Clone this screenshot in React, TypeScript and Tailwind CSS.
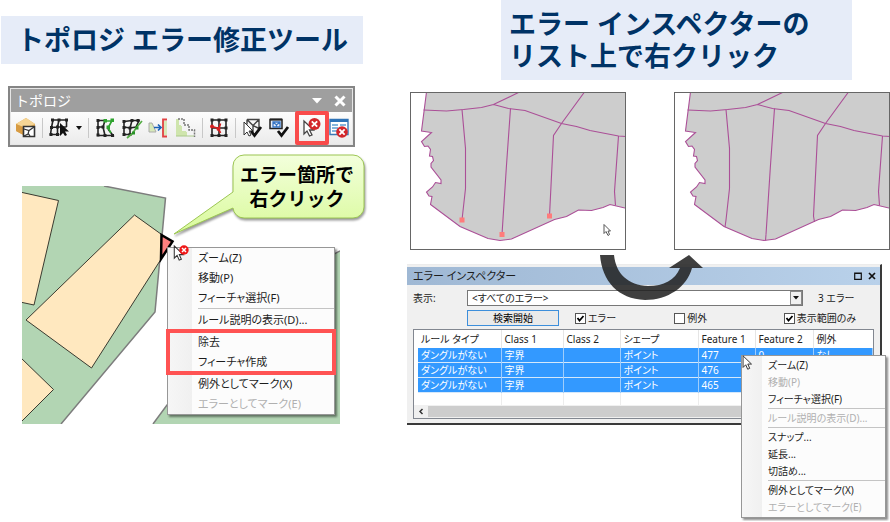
import { ReactNode } from "react";
import clsx from "clsx";

type MenuEntry = { label: string; disabled?: boolean };

const featureMenu: MenuEntry[][] = [
  [{ label: "ズーム(Z)" }, { label: "移動(P)" }, { label: "フィーチャ選択(F)" }],
  [{ label: "ルール説明の表示(D)..." }],
  [{ label: "除去" }, { label: "フィーチャ作成" }],
  [
    { label: "例外としてマーク(X)" },
    { label: "エラーとしてマーク(E)", disabled: true },
  ],
];

const inspectorMenu: MenuEntry[][] = [
  [
    { label: "ズーム(Z)" },
    { label: "移動(P)", disabled: true },
    { label: "フィーチャ選択(F)" },
  ],
  [{ label: "ルール説明の表示(D)...", disabled: true }],
  [{ label: "スナップ..." }, { label: "延長..." }, { label: "切詰め..." }],
  [
    { label: "例外としてマーク(X)" },
    { label: "エラーとしてマーク(E)", disabled: true },
  ],
];

const columns = [
  { title: "ルール タイプ", width: "w-[83px]" },
  { title: "Class 1", width: "w-[62px]" },
  { title: "Class 2", width: "w-[57px]" },
  { title: "シェープ", width: "w-[78px]" },
  { title: "Feature 1", width: "w-[57px]" },
  { title: "Feature 2", width: "w-[58px]" },
  { title: "例外", width: "" },
];

const errors = [
  ["ダングルがない", "字界", "", "ポイント", "477", "0", "なし"],
  ["ダングルがない", "字界", "", "ポイント", "476", "0", "なし"],
  ["ダングルがない", "字界", "", "ポイント", "465", "0", "なし"],
];

function Cursor({ className }: { className?: string }) {
  return (
    <svg viewBox="0 0 12 18" className={className} aria-hidden>
      <path
        d="M1 1v13l3-3 2.2 5 2.3-1-2.2-4.8h4.2z"
        fill="#fff"
        stroke="#333"
        strokeWidth="1.1"
      />
    </svg>
  );
}

function ContextMenu({
  groups,
  large,
  highlight,
}: {
  groups: MenuEntry[][];
  large?: boolean;
  highlight?: number;
}) {
  return (
    <div
      className={clsx(
        "border border-[#979797] shadow-[2px_2px_2px_rgba(0,0,0,0.45)] [font-feature-settings:'palt']",
        large
          ? "bg-[linear-gradient(to_right,#f6f6f6_0,#f0f0f0_24px,#fcfcfc_24px)] text-[11px]"
          : "bg-[linear-gradient(to_right,#f6f6f6_0,#f0f0f0_20px,#fcfcfc_20px)] py-px text-[10px]"
      )}
    >
      {groups.map((group, i) => (
        <div key={i}>
          {i > 0 && (
            <div
              className={clsx(
                "h-0.5 border-t border-[#c4c4c4]",
                large ? "ml-[30px]" : "ml-[26px]"
              )}
            />
          )}
          <div className="relative">
            {group.map((entry) => (
              <button
                key={entry.label}
                disabled={entry.disabled}
                className={clsx(
                  "block w-full text-left whitespace-nowrap text-[#1c1c1c] disabled:text-[#b0b0b0]",
                  large ? "h-5 pl-[30px] leading-5" : "h-[17px] pl-[26px] leading-[17px]"
                )}
              >
                {entry.label}
              </button>
            ))}
            {highlight === i && (
              <div className="pointer-events-none absolute -inset-x-0.5 -inset-y-[3px] border-4 border-[#ff5353]" />
            )}
          </div>
        </div>
      ))}
    </div>
  );
}

function ToolButton({
  label,
  children,
  highlight,
}: {
  label: string;
  children: ReactNode;
  highlight?: boolean;
}) {
  return (
    <button aria-label={label} className="relative size-[22px] shrink-0">
      <svg viewBox="0 0 22 22" className="size-[22px]" fill="none">
        {children}
      </svg>
      {highlight && (
        <span className="absolute -inset-1.5 rounded-xs border-4 border-[#f94b4b]" />
      )}
    </button>
  );
}

function Separator() {
  return <span className="h-5 w-px bg-[#c8c8c8]" />;
}

function GridNodes({ points }: { points: number[][] }) {
  return points.map(([x, y]) => (
    <rect key={`${x}-${y}`} x={x - 1.5} y={y - 1.5} width="3" height="3" fill="#222" />
  ));
}

function ErrorBadge({ x, y, r }: { x: number; y: number; r: number }) {
  const d = r * 0.45;
  return (
    <>
      <circle cx={x} cy={y} r={r} fill="#d3262b" />
      <path
        d={`M${x - d} ${y - d}L${x + d} ${y + d}M${x + d} ${y - d}L${x - d} ${y + d}`}
        stroke="#fff"
        strokeWidth="1.8"
      />
    </>
  );
}

function Toolbar() {
  return (
    <div className="mt-[22px] mr-[45px] ml-2 border-2 border-[#858585] bg-[#e6e6e6] p-px">
      <div className="flex h-[23px] items-center bg-[#9f9f9f] pr-1.5 pl-1 text-white">
        <span className="flex-1 text-[14px] leading-5">トポロジ</span>
        <button aria-label="オプション" className="mr-3">
          <svg viewBox="0 0 10 6" className="h-1.5 w-2.5">
            <path d="M0 0h10L5 5.5z" fill="#fff" />
          </svg>
        </button>
        <button aria-label="閉じる">
          <svg viewBox="0 0 12 12" className="size-3">
            <path d="M1.5 1.5l9 9M10.5 1.5l-9 9" stroke="#fff" strokeWidth="3" />
          </svg>
        </button>
      </div>
      <div className="flex h-8 items-center justify-between bg-linear-to-b from-[#fdfdfd] to-[#ebebeb] pr-0.5 pl-1">
        <ToolButton label="トポロジの選択">
          <path d="M1 7L11 1l9 6v8l-9 4L1 14z" fill="#e3ad56" />
          <path d="M1 7l10-6 9 6-9 4z" fill="#f6d595" />
          <path d="M1 7l9 4v8L1 14z" fill="#d79b43" />
          <path d="M8.500 9.500h11v10h-11z" fill="#fff" stroke="#333" strokeWidth="1.6" />
          <path d="M9 12l5 1.500L19 10M14 13.500l-1 3.500-4 2M13 16l2 3" stroke="#333" strokeWidth="1.200" />
        </ToolButton>
        <Separator />
        <ToolButton label="トポロジ編集">
          <path
            d="M4 3h14.500v7M5 3L3.500 10.500 2.500 17.500h9M11 3L9.500 10l-6 .5M9.500 10v7M9.500 10h9"
            stroke="#222"
            strokeWidth="1.6"
          />
          <GridNodes points={[[4.5, 3], [11, 3], [18.5, 3], [3.5, 10.5], [9.5, 10], [3, 17.5], [9.5, 17.5]]} />
          <path d="M12 6v13l3-3 2 3 2-1-2-3.500h4z" fill="#111" />
        </ToolButton>
        <button aria-label="編集メニュー" className="w-2">
          <svg viewBox="0 0 8 5" className="w-2">
            <path d="M1 0h6L4 4z" fill="#111" />
          </svg>
        </button>
        <Separator />
        <ToolButton label="エッジの修正">
          <path
            d="M4 3.500h7L9 10H3M4 3.500v15h15L14 12M9 10l2 8.500"
            stroke="#222"
            strokeWidth="1.6"
          />
          <GridNodes points={[[4, 3.5], [9, 10], [4, 10.5], [4, 18], [11, 18.5], [18.5, 18.5]]} />
          <path d="M11 4l6.500 0M18 3.500L14 11l3 5" stroke="#2fa32f" strokeWidth="1.600" />
          <path d="M9.500 2h3.500v3.500H9.500zM16.500 1.500h3.500V5h-3.500zM12.500 8.500H16V12h-3.500z" fill="#2fa32f" />
        </ToolButton>
        <ToolButton label="エッジの形状変更">
          <path
            d="M3 4.500l8-1h7L15 10l-6 1-6-1M3 4.500v13h6L9 11M11 3.500L9 11"
            stroke="#222"
            strokeWidth="1.6"
          />
          <GridNodes points={[[3, 4.5], [11, 3.5], [17, 3.5], [3, 10.5], [9, 11], [3, 17.5], [9, 17.5]]} />
          <path d="M6 21l6-5 3-5 6-7" stroke="#55ad45" strokeWidth="1.7" />
          <path d="M11 14.500h3v3h-3zM14.500 9.500h3v3h-3z" fill="#299129" />
        </ToolButton>
        <ToolButton label="エッジの整列">
          <path d="M1 6h3l4 9H1z" fill="#d7e9b9" stroke="#aaa" />
          <path d="M15 4h4v14h-4z" fill="#d7e9b9" />
          <path d="M19 2.500h-4v17h4" stroke="#e04242" strokeWidth="1.8" />
          <path d="M6 10.500h7M10 7.500l3 3-3 3" stroke="#1b62b8" strokeWidth="1.700" />
        </ToolButton>
        <ToolButton label="エッジの一般化">
          <path d="M1 2v17h18v-4h-8V9H6V2z" fill="#cfe5ad" />
          <path d="M4 2h5v6h5v5h5v6h-7v-5H7V8H4z" fill="#f4f4f4" />
          <path d="M3 2h6v6h5v5h5.500v7" stroke="#777" strokeWidth="1.5" strokeDasharray="2 1" />
          <path d="M1 19h18" stroke="#aac98a" />
        </ToolButton>
        <Separator />
        <ToolButton label="共有フィーチャ">
          <path
            d="M4 3h14v15.500H4zM11 3v15.500M4 11h14"
            stroke="#222"
            strokeWidth="1.6"
          />
          <GridNodes points={[[4, 3], [11, 3], [18, 3], [4, 18.5], [11, 18.5], [18, 18.5], [18, 11]]} />
          <path d="M4 9.500l7 2 1.500-5M10.500 12l2 4" stroke="#d51f1f" strokeWidth="1.700" />
          <circle cx="4" cy="9.500" r="2" fill="#d51f1f" />
          <circle cx="10.500" cy="12" r="2" fill="#d51f1f" />
        </ToolButton>
        <Separator />
        <ToolButton label="選択範囲の整合チェック">
          <path d="M6 2.500h12v9M6 2.500l6 6 6-6M6 2.500v5M12 8.500l6 3M12 8.500v7" stroke="#444" strokeWidth="1.400" />
          <path d="M3 5v13l3-3 2 4 2-1-2-4h4z" fill="#fff" stroke="#333" />
          <path d="M10 14l3.500 4.500L20 10" stroke="#111" strokeWidth="2.800" />
        </ToolButton>
        <ToolButton label="表示範囲の整合チェック">
          <path d="M2 2.500h12v9H2z" fill="#e7effa" stroke="#222" strokeWidth="1.5" />
          <path d="M2 2.500h12" stroke="#222" strokeWidth="2" />
          <path d="M5 5h7v5H5zM5 5l3.500 3L12 5M8.500 8v2" stroke="#3976c4" strokeWidth="1.3" />
          <path d="M10 14l3.500 4.500L20 10" stroke="#111" strokeWidth="2.800" />
        </ToolButton>
        <Separator />
        <ToolButton label="トポロジ エラー修正ツール" highlight>
          <path d="M3 4v13l3-3 2.500 5 2.500-1-2.500-5h4z" fill="#fff" stroke="#444" strokeWidth="1.300" />
          <ErrorBadge x={13.5} y={7} r={6} />
        </ToolButton>
        <ToolButton label="エラー インスペクター">
          <path d="M2 2.500h18v15H2z" fill="#fff" stroke="#3b78b5" strokeWidth="1.400" />
          <path d="M2 3.500h18" stroke="#2e73b7" strokeWidth="3" />
          <path d="M4 8h6M12 8h6M4 11h6M4 14h5" stroke="#5f9dd1" strokeWidth="1.500" />
          <ErrorBadge x={14} y={15} r={5.8} />
        </ToolButton>
      </div>
    </div>
  );
}

function ParcelMap() {
  return (
    <svg viewBox="0 0 318 238" className="block w-full">
      <path d="M0 0h82l61.500 12L133 126 39 238H0z" fill="#b2d5b3" />
      <path d="M82 0l61.500 12L133 126 39 238" fill="none" stroke="#7d7d7d" strokeWidth="1.5" />
      <path d="M318 65l-6 3-167 151-14 19h187z" fill="#b2d5b3" />
      <path d="M318 65l-6 3-167 151-14 19" fill="none" stroke="#7d7d7d" strokeWidth="1.5" />
      <g fill="#ffe8bf" stroke="#3a3a30">
        <path d="M-2 6l38.500 8.500L12 119l-14-3z" />
        <path d="M4 134L112.500 29 150 56 69.500 182z" />
        <path d="M-2 171l33.500 32.500L-2 237z" />
      </g>
      <path d="M139.500 49l11 6.500L139 73z" fill="#ff8080" stroke="#000" strokeWidth="2.5" />
    </svg>
  );
}

function Callout() {
  return (
    <div className="absolute -top-8 left-[211px] h-[65px] w-[132px]">
      <svg
        viewBox="0 0 132 65"
        className="absolute inset-0 h-[65px] w-[132px] overflow-visible drop-shadow-[1px_2px_1px_rgba(0,0,0,0.4)]"
      >
        <defs>
          <linearGradient id="callout" x1="0" y1="0" x2="0" y2="1">
            <stop offset="0" stopColor="#f3ffdc" />
            <stop offset="1" stopColor="#d9fa9b" />
          </linearGradient>
        </defs>
        <path
          d="M11 1h109a11 11 0 0 1 11 11v41a11 11 0 0 1-11 11H11A11 11 0 0 1 0 54L-59 80 0 38V12A11 11 0 0 1 11 1z"
          fill="url(#callout)"
          stroke="#9cc653"
        />
      </svg>
      <p className="relative pt-[9px] pr-1 text-center text-[19px] leading-6 font-bold whitespace-nowrap text-black">
        エラー箇所で
        <br />
        右クリック
      </p>
    </div>
  );
}

function CoastMap({ dangles }: { dangles?: boolean }) {
  const coast =
    "16.500 0 11.500 39 21.500 40.500 11.500 49.500 14.500 54.500 18 54 20.500 57.500 19.500 64 22.500 64.500 23.500 68.500 21 71.500 21 75 31 88 31 91.500 25.500 90.500 22.500 95 16.500 100 19 104 22 104.500 20.500 112.500 50 134.500 78 146.500 90 148.500 101.500 147 144.500 127.500 156.500 124.500 168.500 118 181.500 118.500 193 115.500 200 112.500 217 116.500";

  return (
    <svg viewBox="0 0 216 158" className="block w-full min-w-0 bg-white">
      <path d={`M${coast}V0z`} fill="#cdcdcd" />
      <g fill="none" stroke="#ab4f97" strokeWidth="1.1">
        <path d={`M${coast}`} />
        <path d="M13.500 18l23 1 17-1.500 18-2 12-3L109.500 0M83.500 12.500l15 4 16.500 2 36.500 13 15 3 13.500 4 28.500 5.500 8 .5" />
        <path d="M174.500 0l-23 31.500-8 12-4 80.500" />
        <path d="M52 17.500l3.500 39v40L52 128M100.500 16.500l-4 56.500L92 142.500M208.500 44l-4 55.500 1 14" />
        {!dangles && <path d="M52 128l-1 7M92 142.500l-.5 6M139.500 124l1 6" />}
      </g>
      {dangles && (
        <g>
          <path d="M49.500 125.500h5v5h-5zM89.500 140h5v5h-5zM137 121.500h5v5h-5z" fill="#ff7b7b" />
          <path d="M194 132.500v9l2-2 2 4 1.500-1-1.500-3.500h2.500z" fill="#fff" stroke="#444" strokeWidth=".9" />
        </g>
      )}
      <rect x=".5" y=".5" width="215" height="157" fill="none" stroke="#666" />
    </svg>
  );
}

function CheckField({ label, checked }: { label: string; checked?: boolean }) {
  return (
    <label className="flex items-center gap-0.5">
      <span className="grid size-[11px]">
        <input
          type="checkbox"
          defaultChecked={checked}
          className="peer col-start-1 row-start-1 size-[11px] appearance-none border border-[#555] bg-white"
        />
        <svg
          viewBox="0 0 11 11"
          className="pointer-events-none invisible col-start-1 row-start-1 size-[11px] peer-checked:visible"
        >
          <path d="M2.500 5L4.500 7.500 8.500 3" fill="none" stroke="#000" strokeWidth="1.800" />
        </svg>
      </span>
      {label}
    </label>
  );
}

function ErrorTable() {
  return (
    <div className="mx-1.5 mt-0.5 border border-[#828790] bg-white pl-1">
      <table className="w-full table-fixed border-collapse text-left text-[10px] whitespace-nowrap">
        <thead>
          <tr className="h-[18px]">
            {columns.map((column) => (
              <th
                key={column.title}
                className={clsx(
                  "border-r border-[#e5e5e5] p-0 pl-[3px] leading-[18px] font-normal text-[#222] last:border-r-0",
                  column.width
                )}
              >
                {column.title}
              </th>
            ))}
          </tr>
        </thead>
        <tbody>
          {errors.map((row, i) => (
            <tr key={i} className="border-b border-[#d5e8fb] bg-[#3399ff] text-white">
              {row.map((cell, j) => (
                <td
                  key={j}
                  className="h-3.5 border-r border-[#9fcdfb] p-0 pl-[3px] leading-[14px]"
                >
                  {cell}
                </td>
              ))}
            </tr>
          ))}
          <tr>
            {columns.map((column) => (
              <td key={column.title} className="h-3 border-r border-[#ededed] p-0 last:border-r-0" />
            ))}
          </tr>
        </tbody>
      </table>
      <div className="-ml-1 flex h-[13px] items-center bg-[#f0f0f0]">
        <svg viewBox="0 0 14 13" className="w-3.5">
          <path d="M8.500 4L6 6.500 8.500 9" fill="none" stroke="#333" strokeWidth="1.5" />
        </svg>
        <div className="mr-3.5 h-[11px] flex-1 bg-[#cdcdcd]" />
      </div>
    </div>
  );
}

function ErrorInspector() {
  return (
    <section className="border-t border-r-2 border-b-2 border-t-[#ececec] border-r-[#3a3a3a] border-b-[#3a3a3a] bg-[#f0f0f0] pt-0.5 pb-1 text-[10px] text-[#1c1c1c] [font-feature-settings:'palt']">
      <header className="flex h-[18px] items-center bg-linear-to-r from-[#9fb8d4] to-[#b9d1ea] pr-1 pl-1.5">
        <h2 className="flex-1 text-[11px] leading-[18px]">エラー インスペクター</h2>
        <button aria-label="最大化" className="mr-1.5">
          <svg viewBox="0 0 8 8" className="size-2">
            <path d="M.7 1h6.600v6.300H.7zM.7 1.500h6.600" fill="none" stroke="#111" strokeWidth="1.200" />
          </svg>
        </button>
        <button aria-label="閉じる">
          <svg viewBox="0 0 8 8" className="size-2">
            <path d="M1 1l6 6M7 1L1 7" stroke="#111" strokeWidth="1.700" />
          </svg>
        </button>
      </header>
      <div className="flex h-6 items-center pt-0.5 pl-1.5">
        <label htmlFor="filter" className="w-[54px]">
          表示:
        </label>
        <div className="flex h-4 flex-1 border border-[#777] bg-white">
          <select
            id="filter"
            className="min-w-0 flex-1 appearance-none bg-transparent pl-1 text-[10px] leading-[14px]"
          >
            <option>&lt;すべてのエラー&gt;</option>
          </select>
          <span className="pointer-events-none flex w-3 items-center justify-center border border-[#8a8a8a] bg-[#f0f0f0]">
            <svg viewBox="0 0 6 4" className="w-1.5">
              <path d="M0 0h6L3 3.500z" fill="#111" />
            </svg>
          </span>
        </div>
        <span className="w-[77px] pl-[15px]">3 エラー</span>
      </div>
      <div className="flex h-[18px] items-center pl-[60px]">
        <button className="mr-4 h-4 w-[92px] border border-[#3c8edb] bg-[#eaeaea] leading-[14px] text-black">
          検索開始
        </button>
        <div className="grid flex-1 grid-cols-[99fr_109fr_96fr]">
          <CheckField label="エラー" checked />
          <CheckField label="例外" />
          <CheckField label="表示範囲のみ" checked />
        </div>
      </div>
      <ErrorTable />
    </section>
  );
}

export default function App() {
  return (
    <main className="grid grid-cols-[400fr_490fr] items-start bg-white font-['Noto_Sans','Noto_Sans_CJK_JP',sans-serif]">
      <section className="min-w-0">
        <h1 className="mt-4 mr-[37px] ml-px h-12 bg-[#e6ecf8] pl-4 text-[27px] leading-[48px] font-bold whitespace-nowrap text-[#003366]">
          トポロジ エラー修正ツール
        </h1>
        <Toolbar />
        <div className="relative mt-[39px] mr-[60px] ml-[22px]">
          <ParcelMap />
          <div className="absolute top-[61px] left-[145px] w-[168px]">
            <ContextMenu groups={featureMenu} large highlight={2} />
          </div>
          <Callout />
          <Cursor className="absolute top-[59px] left-[151px] h-[17px] w-3" />
          <svg viewBox="0 0 10 10" className="absolute top-[59px] left-[157px] size-2.5">
            <circle cx="5" cy="5" r="4.700" fill="#f01818" />
            <path d="M3 3l4 4M7 3L3 7" stroke="#fff" strokeWidth="1.500" />
          </svg>
        </div>
      </section>

      <section className="min-w-0">
        <h1 className="mr-[38px] ml-[101px] h-20 bg-[#e6ecf8] pt-2 pl-2 text-[27px] leading-8 font-bold whitespace-nowrap text-[#003366]">
          エラー インスペクターの
          <br />
          リスト上で右クリック
        </h1>
        <div className="mt-3 ml-2.5 grid grid-cols-2 gap-12">
          <CoastMap dangles />
          <CoastMap />
        </div>
        <div className="relative mt-3.5 mr-2 mb-24 ml-[7px]">
          <ErrorInspector />
          <svg
            viewBox="0 0 104 46"
            className="pointer-events-none absolute -top-[9px] left-[193px] h-[46px] w-[104px]"
          >
            <path
              d="M0 0h14C16 19 28 30 48 31c16 0 27-6 32-18H69L89 0l14 13H92C87 32 68 45 45 45 18 44 2 26 0 0z"
              fill="#1f1f1f"
              fillOpacity=".86"
            />
          </svg>
          <div className="absolute top-[91px] -right-1 w-[145px]">
            <ContextMenu groups={inspectorMenu} />
          </div>
          <Cursor className="absolute top-[91px] right-[129px] h-4 w-[11px]" />
        </div>
      </section>
    </main>
  );
}
